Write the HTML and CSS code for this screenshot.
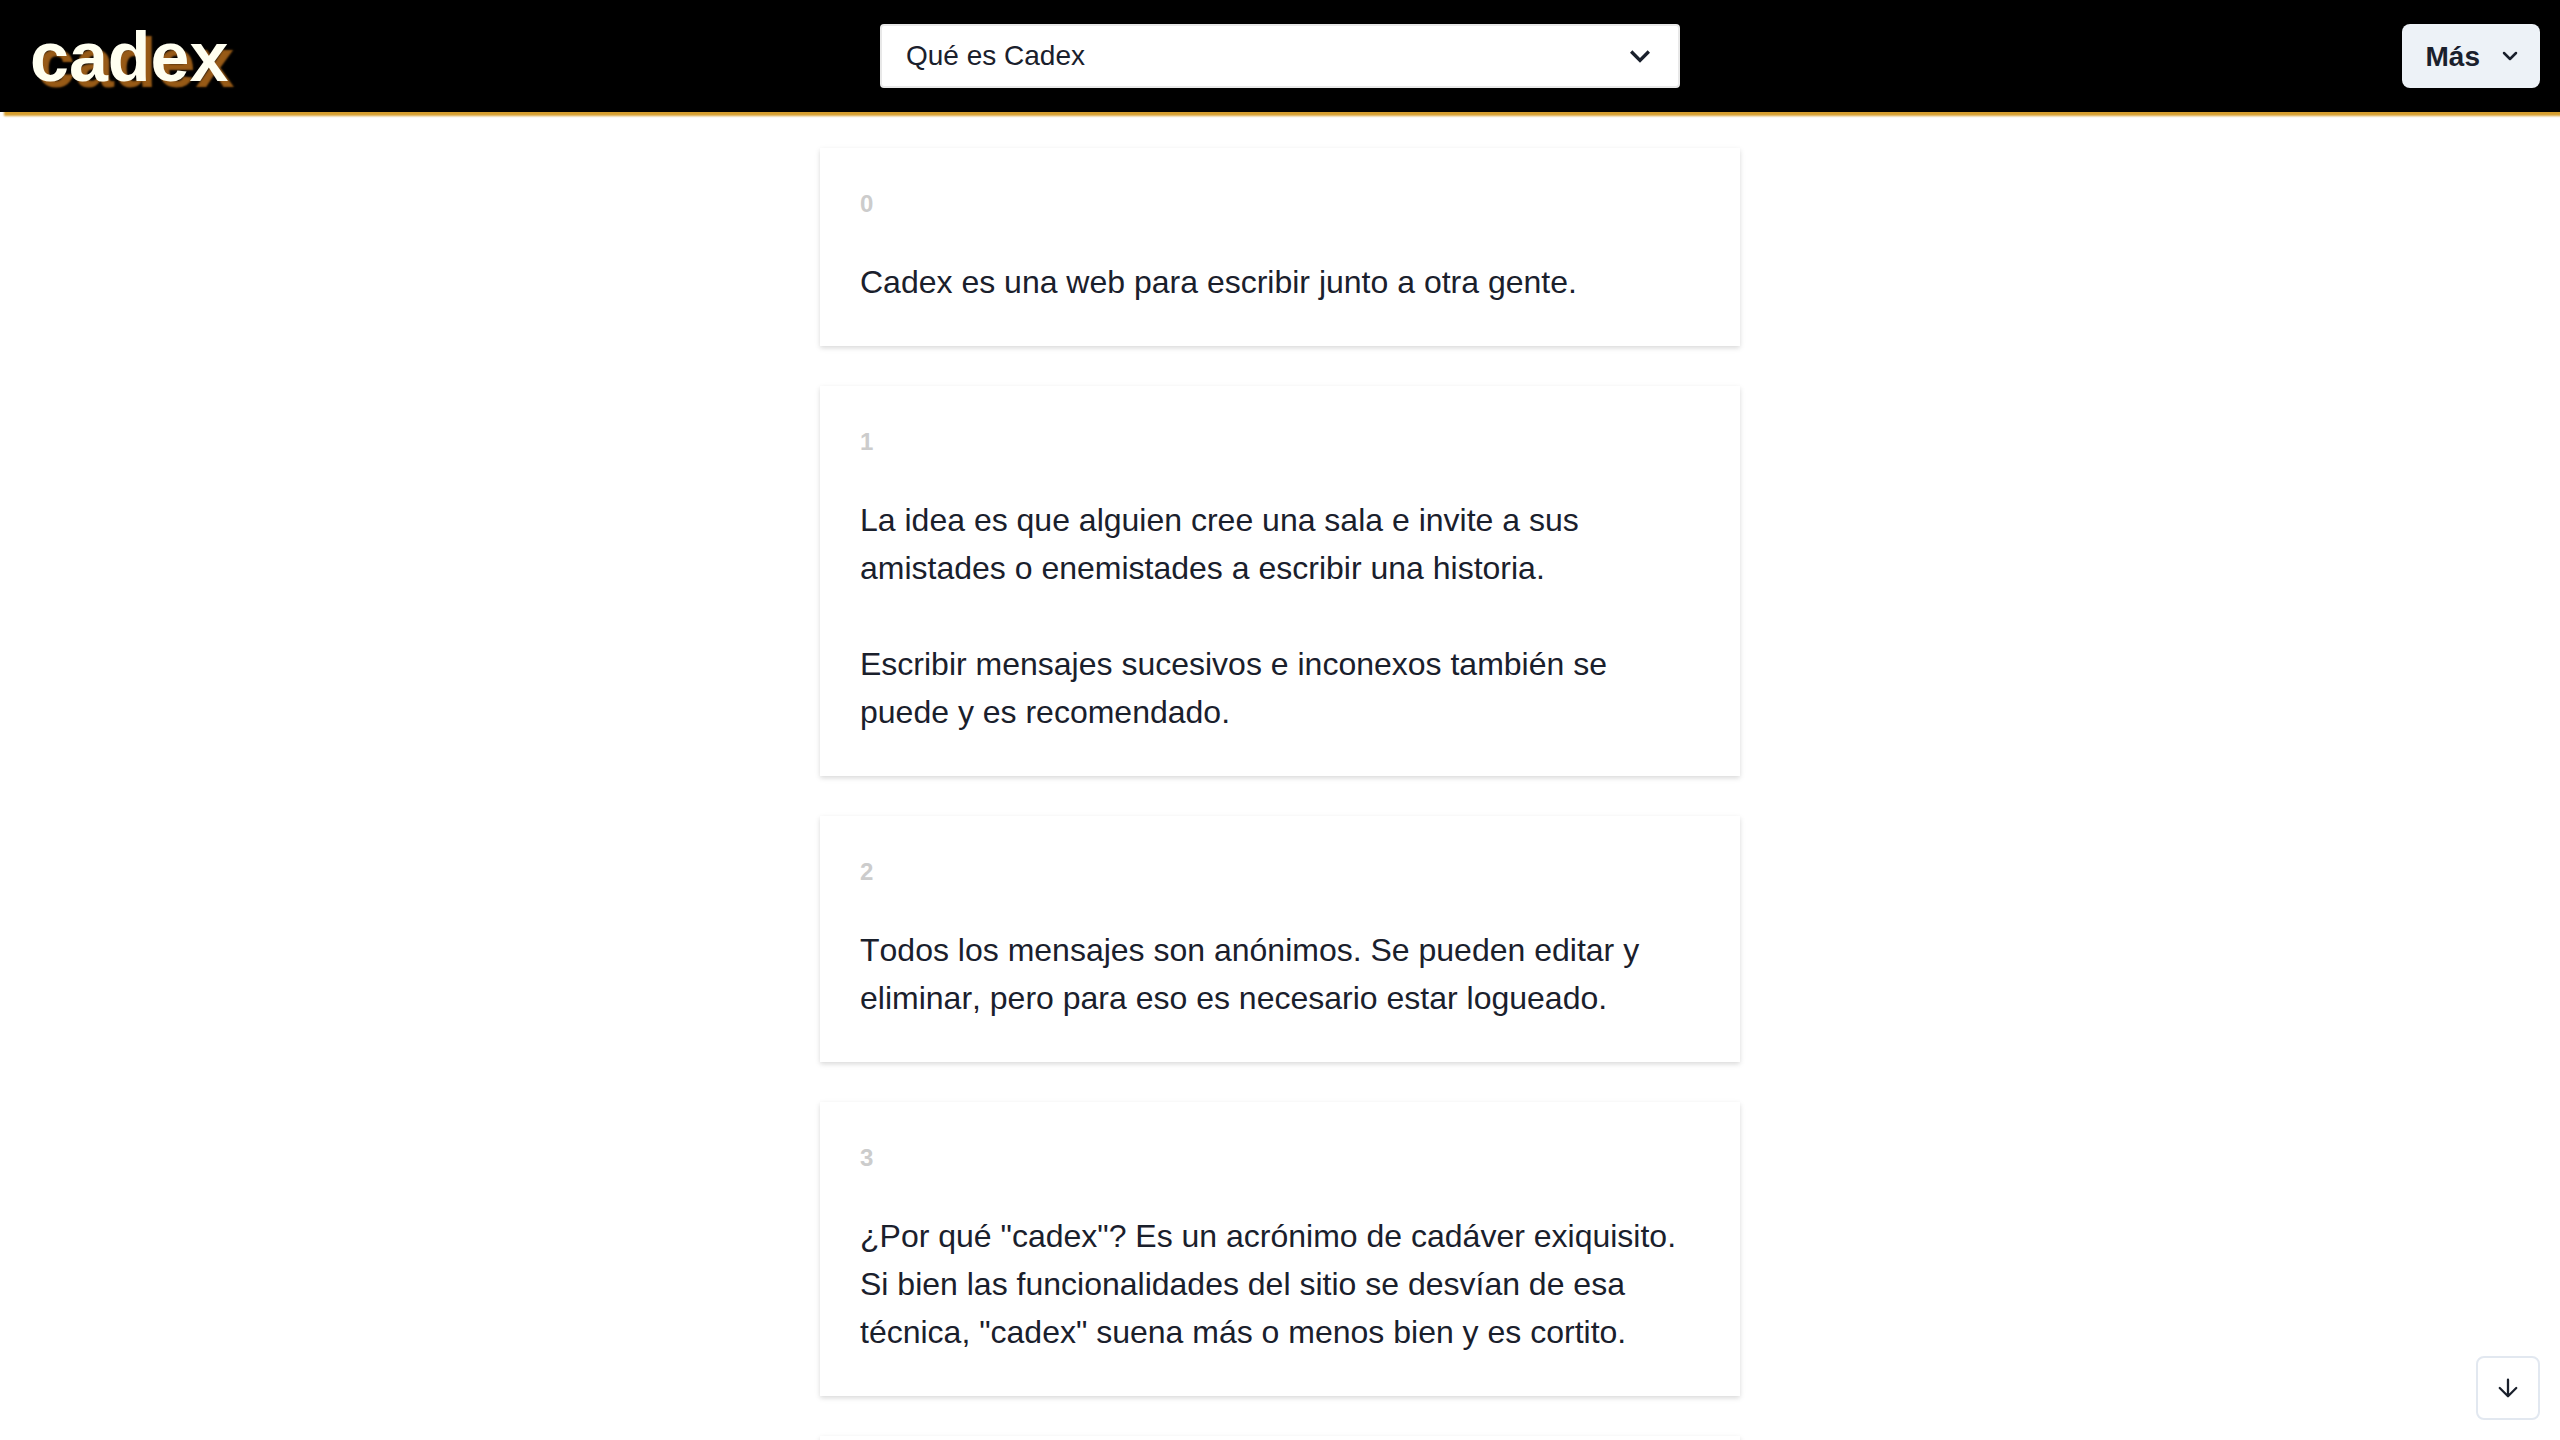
FILE: index.html
```html
<!DOCTYPE html>
<html lang="es">
<head>
<meta charset="utf-8">
<meta name="viewport" content="width=device-width, initial-scale=1">
<title>cadex</title>
<link rel="stylesheet" href="styles.css">
</head>
<body>
<header class="topbar">
  <a class="logo" href="#">cadex</a>
  <div class="room">
    <select class="room-select" aria-label="Sala">
      <option>Qué es Cadex</option>
    </select>
    <svg class="room-icon" viewBox="0 0 24 24" aria-hidden="true"><path fill="currentColor" d="M16.59 8.59L12 13.17 7.41 8.59 6 10l6 6 6-6z"/></svg>
  </div>
  <button class="more" type="button">
    <span class="more-label">Más</span>
    <svg class="more-icon" viewBox="0 0 24 24" aria-hidden="true"><path d="M6 9l6 6 6-6" fill="none" stroke="currentColor" stroke-width="2.5" stroke-linecap="round" stroke-linejoin="round"/></svg>
  </button>
</header>
<main class="messages">
  <article class="card">
    <h2 class="number">0</h2>
    <p class="text">Cadex es una web para escribir junto a otra gente.</p>
  </article>
  <article class="card">
    <h2 class="number">1</h2>
    <p class="text">La idea es que alguien cree una sala e invite a sus amistades o enemistades a escribir una historia.</p>
    <p class="text">Escribir mensajes sucesivos e inconexos también se puede y es recomendado.</p>
  </article>
  <article class="card">
    <h2 class="number">2</h2>
    <p class="text">Todos los mensajes son anónimos. Se pueden editar y eliminar, pero para eso es necesario estar logueado.</p>
  </article>
  <article class="card">
    <h2 class="number">3</h2>
    <p class="text">¿Por qué "cadex"? Es un acrónimo de cadáver exiquisito. Si bien las funcionalidades del sitio se desvían de esa técnica, "cadex" suena más o menos bien y es cortito.</p>
  </article>
  <article class="card"></article>
</main>
<button class="to-bottom" type="button" aria-label="Ir al final">
  <svg class="to-bottom-icon" viewBox="0 0 24 24" aria-hidden="true"><path d="M12 3v18M3 12l9 9 9-9" fill="none" stroke="currentColor" stroke-width="2.5" stroke-linecap="round" stroke-linejoin="round"/></svg>
</button>
</body>
</html>
```
FILE: styles.css
```css
* {
  box-sizing: border-box;
}

body {
  margin: 0;
  height: 100vh;
  overflow: hidden;
  display: flex;
  flex-direction: column;
  background: #fff;
  color: #1a202c;
  font-family: "Liberation Sans", Arial, sans-serif;
  font-kerning: none;
}

/* Stacked above the messages so its shadow stays visible over them */
.topbar {
  position: relative;
  z-index: 1;
  flex: none;
  display: grid;
  grid-template-columns: 1fr minmax(0, 800px) 1fr;
  align-items: center;
  height: 112px;
  padding: 0 20px;
  background: #000;
  box-shadow: 4px 4px 2px #d69e2e;
}

.logo {
  justify-self: start;
  padding: 2px 0 0 10px;
  color: #fffff0;
  font-size: 70px;
  font-weight: 700;
  line-height: 80px;
  text-decoration: none;
  text-shadow: 6px 6px 2px #975a16;
}

.room {
  display: grid;
  align-items: center;
}

.room > * {
  grid-area: 1 / 1;
}

.room-select {
  appearance: none;
  width: 100%;
  height: 64px;
  padding: 0 64px 2px 24px;
  border: 2px solid #e8e8e8;
  border-radius: 4px;
  background: #fff;
  color: inherit;
  font: inherit;
  font-size: 28px;
}

.room-icon {
  justify-self: end;
  width: 40px;
  height: 40px;
  margin-right: 20px;
  pointer-events: none;
}

.more {
  justify-self: end;
  display: flex;
  align-items: center;
  gap: 18px;
  height: 64px;
  padding: 0 18px 0 24px;
  border: 0;
  border-radius: 8px;
  background: #edf2f7;
  color: inherit;
  font: inherit;
  font-size: 28px;
  font-weight: 700;
}

.more-label {
  padding-top: 2px;
}

.more-icon {
  width: 24px;
  height: 24px;
}

.messages {
  flex: 1;
  min-height: 0;
  overflow: hidden;
  display: flex;
  flex-direction: column;
  align-items: center;
  gap: 40px;
  padding: 36px 20px 0;
}

.card {
  flex: none;
  width: 100%;
  max-width: 920px;
  padding: 40px;
  box-shadow: 0 2px 6px rgba(0, 0, 0, 0.1), 0 2px 4px rgba(0, 0, 0, 0.06);
  background: #fff;
}

.number {
  margin: 0 0 38px;
  color: #ccc;
  font-size: 24px;
  line-height: 32px;
}

.text {
  margin: 0;
  font-size: 32px;
  line-height: 48px;
}

.text + .text {
  margin-top: 48px;
}

.to-bottom {
  position: fixed;
  right: 20px;
  bottom: 20px;
  display: grid;
  place-items: center;
  width: 64px;
  height: 64px;
  padding: 0;
  border: 2px solid #e2e8f0;
  border-radius: 8px;
  background: #fff;
  color: inherit;
}

.to-bottom-icon {
  width: 22px;
  height: 22px;
}
```
